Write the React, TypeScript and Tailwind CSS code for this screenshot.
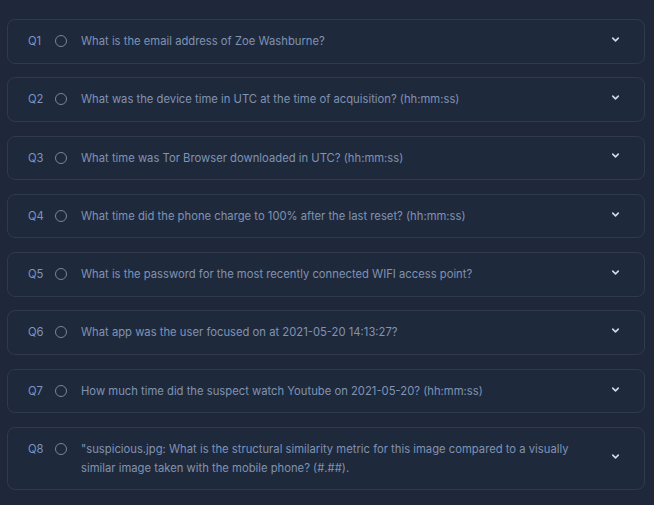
import React from 'react';
import { ChevronDown } from 'lucide-react';

const questions = [
  'What is the email address of Zoe Washburne?',
  'What was the device time in UTC at the time of acquisition? (hh:mm:ss)',
  'What time was Tor Browser downloaded in UTC? (hh:mm:ss)',
  'What time did the phone charge to 100% after the last reset? (hh:mm:ss)',
  'What is the password for the most recently connected WIFI access point?',
  'What app was the user focused on at 2021-05-20 14:13:27?',
  'How much time did the suspect watch Youtube on 2021-05-20? (hh:mm:ss)',
  '"suspicious.jpg: What is the structural similarity metric for this image compared to a visually similar image taken with the mobile phone? (#.##).',
];

function App() {
  return (
    <div
      className="min-h-screen bg-[#1e283a] pt-[19px] pl-[7px] pr-[9px] pb-6"
      style={{ fontFamily: 'Inter, "Noto Sans", sans-serif' }}
    >
      <div className="flex flex-col gap-[13.8px]">
        {questions.map((q, i) => (
          <div
            key={i}
            className="flex items-center rounded-lg border border-[#2f3a4d] bg-[#1f293c] py-[12px] pl-[20px] pr-[22px]"
          >
            <div className="flex flex-1 items-start text-[11.25px] leading-[18.5px]">
              <span className="w-[27px] shrink-0 text-[#7b95c0]">Q{i + 1}</span>
              <span className="mr-[14px] mt-[3px] h-[12px] w-[12px] shrink-0 rounded-full border-[1.5px] border-[#7a8598]" />
              <span className="pr-8 text-[#7f93b3]">{q}</span>
            </div>
            <ChevronDown size={11} strokeWidth={3.5} className="-mt-1 mr-[1px] shrink-0 text-[#d0d8e4]" />
          </div>
        ))}
      </div>
    </div>
  );
}

export default App;
